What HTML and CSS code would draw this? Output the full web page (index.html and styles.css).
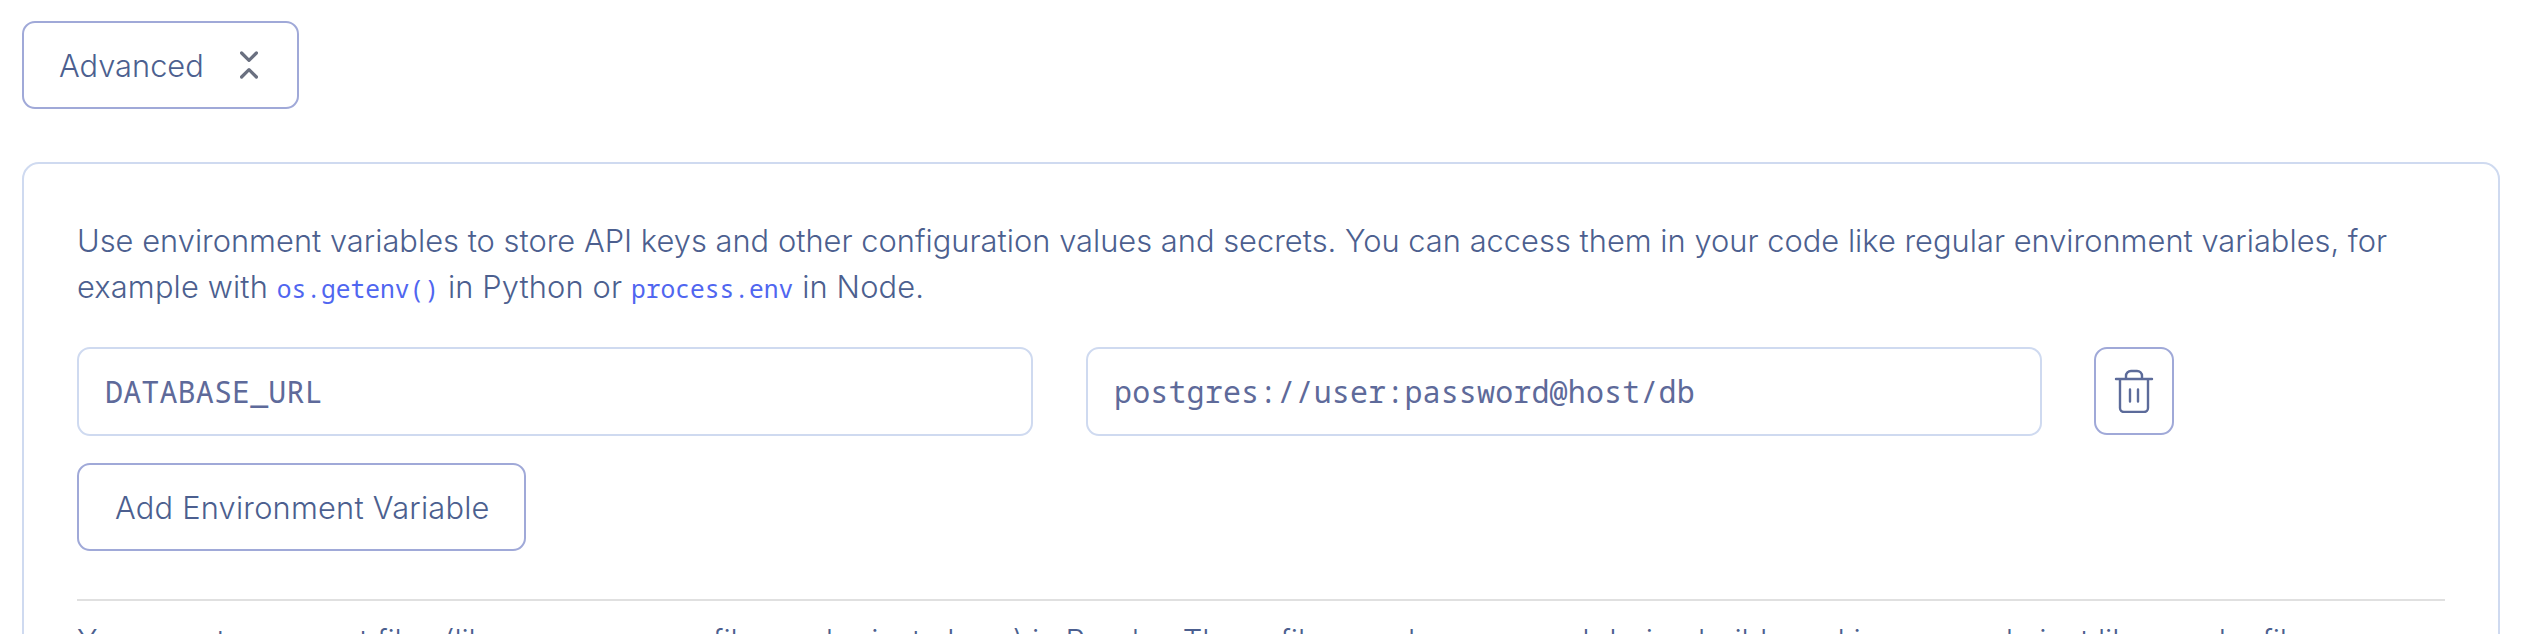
FILE: index.html
```html
<!DOCTYPE html>
<html lang="en">
<head>
<meta charset="utf-8">
<title>Environment Variables</title>
<link rel="stylesheet" href="styles.css">
</head>
<body>
<main class="page">
  <button class="btn btn-advanced" type="button">
    <span class="advanced-label">Advanced</span>
    <svg class="collapse-icon" width="18" height="28" viewBox="0 0 18 28"><path d="M1.600 2 9 9.400l7.400-7.400M1.600 26 9 18.600 16.400 26"/></svg>
  </button>
  <section class="panel">
    <p class="copy"><span class="line line-one">Use environment variables to store API keys and other configuration values and secrets. You can access them in your code like regular environment variables, for</span>
    <span class="line line-two">example with <code>os.getenv()</code> in Python or <code>process.env</code> in Node.</span></p>
    <div class="row">
      <div class="field">DATABASE_URL</div>
      <div class="field">postgres://user:password@host/db</div>
      <button class="btn btn-delete" type="button" aria-label="Delete">
        <svg class="trash-icon" width="40" height="44" viewBox="0 0 40 44"><path d="M2 10h36M12 10V7a5 5 0 0 1 5-5h6a5 5 0 0 1 5 5V10M6 10v29a4 4 0 0 0 4 4h20a4 4 0 0 0 4-4V10M16 20.500v12M24 20.500v12"/></svg>
      </button>
    </div>
    <button class="btn btn-add" type="button"><span class="add-label">Add Environment Variable</span></button>
    <hr class="divider">
    <p class="copy"><span class="line line-files">You can store secret files (like <code>.env</code> or <code>.npmrc</code> files and private keys) in Render. These files can be accessed during builds and in your code just like regular files.</span></p>
  </section>
</main>
</body>
</html>
```

FILE: styles.css
```css
* { box-sizing: border-box; }
html, body { height: 634px; overflow: hidden; }
body {
  margin: 0;
  background: #fff;
  color: #4c5f8f;
  font-family: Inter, "Liberation Sans", sans-serif;
  font-size: 30.8px;
  font-weight: 350;
}
.page { padding: 21px 33px 0 22px; }
.btn {
  display: flex;
  align-items: center;
  height: 88px;
  margin: 0;
  padding: 0;
  border: 2px solid #a0a9d8;
  border-radius: 13px;
  background: #fff;
  color: inherit;
  font: inherit;
  white-space: nowrap;
}
.btn-advanced { width: 277px; padding: 0 39px 0 35px; justify-content: space-between; }
.collapse-icon { fill: none; stroke: #6a7080; stroke-width: 3.2; stroke-linecap: round; stroke-linejoin: round; }
.panel {
  width: 2478px;
  height: 520px;
  margin-top: 53px;
  padding: 54px 53px 0;
  border: 2px solid #cfdaf0;
  border-radius: 17px;
  overflow: hidden;
}
.copy { margin: 0; line-height: 46px; white-space: nowrap; }
.line { display: block; height: 46px; }
.line-one { letter-spacing: 0.03px; }
.line-two { letter-spacing: 0.15px; }
.line-files { letter-spacing: -0.09px; }
code { color: #5066f0; font-family: "Noto Sans Mono", "DejaVu Sans Mono", monospace; font-size: 24.6px; font-weight: 400; letter-spacing: 0; }
.row { display: flex; gap: 53px; margin-top: 37px; }
.field {
  width: 956px;
  height: 89px;
  padding-left: 26px;
  border: 2px solid #cfdaf0;
  border-radius: 13px;
  color: #5e6a9a;
  font: 400 30px/86px "Noto Sans Mono", "DejaVu Sans Mono", monospace;
  letter-spacing: 0.15px;
}
.btn-delete { width: 80px; justify-content: center; margin-left: -1px; }
.trash-icon { fill: none; stroke: #5c6b9a; stroke-width: 2.4; stroke-linecap: round; stroke-linejoin: round; }
.btn-add { width: 449px; margin-top: 27px; padding-left: 36px; letter-spacing: 0.22px; }
.divider { height: 2px; margin: 48px 0 17px; border: 0; background: #e0e0e0; }
```
